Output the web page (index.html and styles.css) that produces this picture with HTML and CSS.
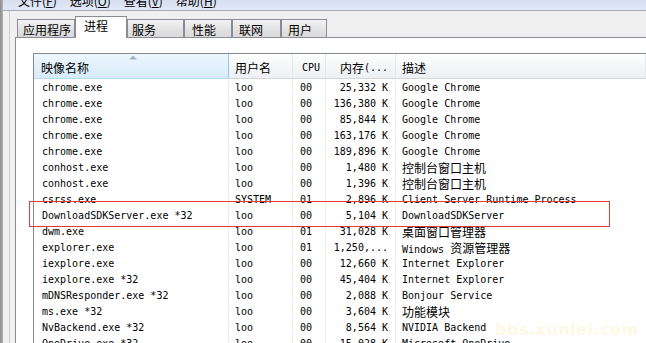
FILE: index.html
```html
<!DOCTYPE html>
<html lang="zh-CN">
<head>
  <meta charset="UTF-8">
  <title>Windows 任务管理器</title>
  <link rel="stylesheet" href="styles.css">
</head>
<body>

<div class="frame"></div>

<div class="win">
  <div class="menubar">
    <span class="menu">文件(<u>F</u>)</span>
    <span class="menu">选项(<u>O</u>)</span>
    <span class="menu">查看(<u>V</u>)</span>
    <span class="menu">帮助(<u>H</u>)</span>
  </div>

  <div class="area">
    <div class="gutter"></div>

    <div class="tabbox">
      <div class="tabs">
        <div class="tab t1">应用程序</div>
        <div class="tab t2 active">进程</div>
        <div class="tab t3">服务</div>
        <div class="tab t4">性能</div>
        <div class="tab t5">联网</div>
        <div class="tab t6">用户</div>
      </div>

      <div class="panel">
        <div class="list">
          <div class="head">
            <div class="hc sorted">
              <svg class="arrow" width="8" height="5" viewBox="0 0 8 5"><polygon points="0,4.5 4,0.5 8,4.5" fill="#9db5d3"/></svg>
              <span class="zh">映像名称</span>
            </div>
            <div class="hc"><span class="zh">用户名</span></div>
            <div class="hc cpu">CPU</div>
            <div class="hc right"><span class="zh">内存</span>(...</div>
            <div class="hc"><span class="zh">描述</span></div>
          </div>

          <div class="row"><span>chrome.exe</span><span>loo</span><span>00</span><span class="num">25,332 K</span><span>Google Chrome</span></div>
          <div class="row"><span>chrome.exe</span><span>loo</span><span>00</span><span class="num">136,380 K</span><span>Google Chrome</span></div>
          <div class="row"><span>chrome.exe</span><span>loo</span><span>00</span><span class="num">85,844 K</span><span>Google Chrome</span></div>
          <div class="row"><span>chrome.exe</span><span>loo</span><span>00</span><span class="num">163,176 K</span><span>Google Chrome</span></div>
          <div class="row"><span>chrome.exe</span><span>loo</span><span>00</span><span class="num">189,896 K</span><span>Google Chrome</span></div>
          <div class="row"><span>conhost.exe</span><span>loo</span><span>00</span><span class="num">1,480 K</span><span class="zh">控制台窗口主机</span></div>
          <div class="row"><span>conhost.exe</span><span>loo</span><span>00</span><span class="num">1,396 K</span><span class="zh">控制台窗口主机</span></div>
          <div class="row"><span>csrss.exe</span><span>SYSTEM</span><span>01</span><span class="num">2,896 K</span><span>Client Server Runtime Process</span></div>
          <div class="row"><span>DownloadSDKServer.exe *32</span><span>loo</span><span>00</span><span class="num">5,104 K</span><span>DownloadSDKServer</span></div>
          <div class="row"><span>dwm.exe</span><span>loo</span><span>01</span><span class="num">31,028 K</span><span class="zh">桌面窗口管理器</span></div>
          <div class="row"><span>explorer.exe</span><span>loo</span><span>01</span><span class="num">1,250,...</span><span>Windows <span class="zh">资源管理器</span></span></div>
          <div class="row"><span>iexplore.exe</span><span>loo</span><span>00</span><span class="num">12,660 K</span><span>Internet Explorer</span></div>
          <div class="row"><span>iexplore.exe *32</span><span>loo</span><span>00</span><span class="num">45,404 K</span><span>Internet Explorer</span></div>
          <div class="row"><span>mDNSResponder.exe *32</span><span>loo</span><span>00</span><span class="num">2,088 K</span><span>Bonjour Service</span></div>
          <div class="row"><span>ms.exe *32</span><span>loo</span><span>00</span><span class="num">3,604 K</span><span class="zh">功能模块</span></div>
          <div class="row"><span>NvBackend.exe *32</span><span>loo</span><span>00</span><span class="num">8,564 K</span><span>NVIDIA Backend</span></div>
          <div class="row"><span>OneDrive.exe *32</span><span>loo</span><span>00</span><span class="num">15,028 K</span><span>Microsoft OneDrive</span></div>

          <div class="mark"></div>
        </div>
      </div>
    </div>
  </div>
</div>

<div class="watermark">bbs.xunlei.com</div>

</body>
</html>
```

FILE: styles.css
```css
body {
  margin: 0;
  height: 343px;
  display: flex;
  overflow: hidden;
  position: relative;
  background: #f0f0f0;
  font-family: "DejaVu Sans Mono", "Liberation Mono", monospace;
  font-size: 10px;
  color: #000;
}

.zh {
  font-family: "Noto Sans CJK SC", sans-serif;
  font-size: 12px;
}

.frame {
  width: 3px;
  flex: none;
  background: linear-gradient(to right, #8a8a8a, #b4b4b4);
}

.win {
  flex: 1;
  display: flex;
  flex-direction: column;
  min-width: 0;
}

.menubar {
  height: 10px;
  flex: none;
  overflow: hidden;
  border-bottom: 1px solid #a7abb6;
  background: linear-gradient(to bottom, #d6def0, #e2e8f6);
  display: flex;
  gap: 13px;
  padding-left: 15px;
  font-family: "Noto Sans CJK SC", sans-serif;
  font-size: 12px;
}

.menu {
  line-height: 12px;
  margin-top: -5px;
}

.area {
  flex: 1;
  display: flex;
  min-height: 0;
}

.gutter {
  width: 12px;
  flex: none;
  background: linear-gradient(to right, #f0f0f0 6px, #cdcdcd 6px, #cdcdcd 7px, #f0f0f0 7px);
}

.tabbox {
  flex: 1;
  display: flex;
  flex-direction: column;
  min-width: 0;
}

.tabs {
  display: flex;
  align-items: flex-end;
  margin: 5px 0 0 2px;
  font-family: "Noto Sans CJK SC", sans-serif;
  font-size: 12px;
}

.tab {
  box-sizing: border-box;
  height: 18px;
  border: 1px solid #898c95;
  border-bottom: none;
  background: linear-gradient(to bottom, #f3f3f3, #e4e4e4 50%, #d9d9d9);
  padding: 2px 0 0 5px;
  display: flex;
  align-items: center;
  line-height: 14px;
}

.tab.active {
  height: 22px;
  margin-bottom: -1px;
  background: #fff;
  padding: 0 0 3px 8px;
  position: relative;
  z-index: 1;
}

.t1 { width: 58px; }
.t2 { width: 52px; }
.t3 { width: 57px; padding-left: 4px; }
.t4 { width: 48px; padding-left: 7px; }
.t5 { width: 49px; padding-left: 6px; }
.t6 { width: 46px; padding-left: 6px; }

.panel {
  flex: 1;
  background: #fff;
  border-top: 1px solid #898c95;
  border-left: 1px solid #898c95;
  padding: 15px 0 0 17px;
  min-height: 0;
}

.list {
  position: relative;
  border-top: 1px solid #828790;
  border-left: 1px solid #828790;
  height: 100%;
}

.head,
.row {
  display: grid;
  grid-template-columns: 195px 64px 33px 70px 1fr;
}

.hc {
  box-sizing: border-box;
  height: 25px;
  border-right: 1px solid #e3e8ee;
  border-bottom: 1px solid #d5d5d5;
  background: linear-gradient(to bottom, #ffffff, #f5f6f7 50%, #eef0f3);
  padding: 2px 0 0 6px;
  display: flex;
  align-items: center;
  white-space: nowrap;
}

.hc.sorted {
  position: relative;
  padding-left: 7px;
  border-right-color: #8ccbf0;
  border-bottom-color: #b6dcf4;
  background: linear-gradient(to bottom, #eef7fd, #e2f1fb 50%, #d6ebf9);
}

.hc.cpu {
  padding-left: 9px;
}

.hc.right {
  justify-content: flex-end;
  padding-right: 7px;
}

.arrow {
  position: absolute;
  left: 95px;
  top: 1px;
}

.row > span {
  display: block;
  box-sizing: border-box;
  height: 16px;
  line-height: 16px;
  padding: 1px 0 0 6px;
  border-right: 1px solid #eeeeee;
  white-space: nowrap;
}

.row > span:first-child {
  padding-left: 8px;
}

.row > span:nth-child(3) {
  padding-left: 7px;
}

.row > span.num {
  text-align: right;
  padding: 1px 7px 0 0;
}

.row > span:last-child {
  border-right: none;
}

.mark {
  position: absolute;
  left: -5px;
  top: 147px;
  width: 581px;
  height: 26px;
  box-sizing: border-box;
  border: 1px solid #e5393a;
}

.watermark {
  position: absolute;
  left: 495px;
  top: 320px;
  font-family: "DejaVu Sans", sans-serif;
  font-weight: bold;
  font-size: 16px;
  color: #fdf8e4;
  letter-spacing: 0.5px;
}
```
